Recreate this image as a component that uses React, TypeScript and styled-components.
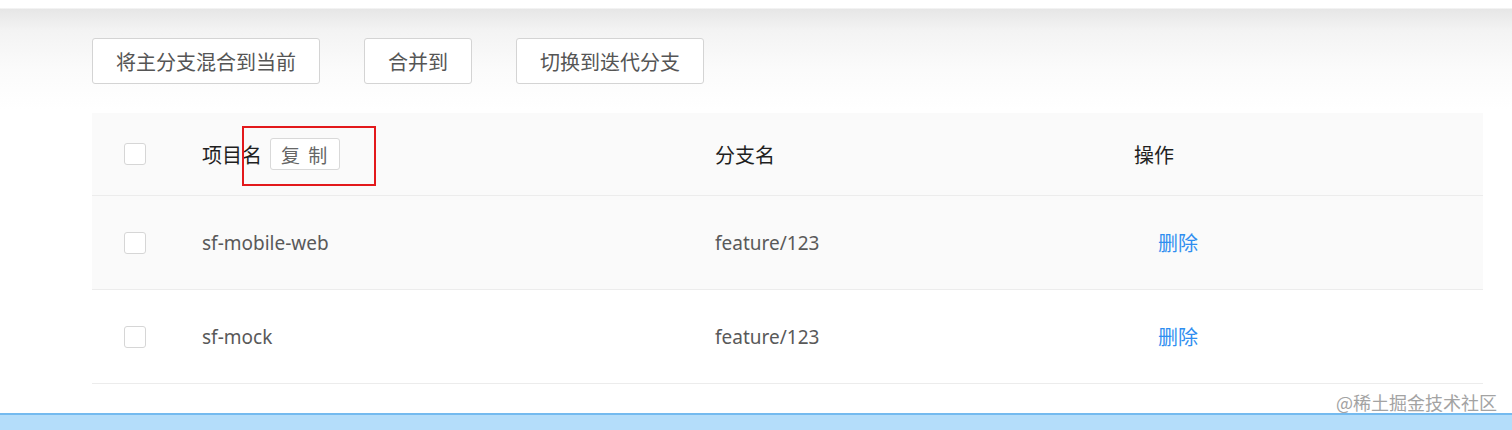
import { styled, createGlobalStyle } from "styled-components";

const GlobalStyle = createGlobalStyle`
  html, body {
    margin: 0;
    padding: 0;
    background: #fff;
  }
  body {
    font-family: "Noto Sans", "Noto Sans CJK SC", sans-serif;
  }
`;

const rows = [
  { name: "sf-mobile-web", branch: "feature/123", hover: true },
  { name: "sf-mock", branch: "feature/123", hover: false },
];

export const App = () => {
  return (
    <Page>
      <GlobalStyle />
      <Toolbar>
        <Button>将主分支混合到当前</Button>
        <Button>合并到</Button>
        <Button>切换到迭代分支</Button>
      </Toolbar>
      <Table>
        <HeadRow>
          <Cell>
            <Check />
          </Cell>
          <Cell>
            <NameHead>
              项目名
              <CopyButton>复 制</CopyButton>
              <Mark />
            </NameHead>
          </Cell>
          <Cell>分支名</Cell>
          <Cell>操作</Cell>
        </HeadRow>
        {rows.map((r) => (
          <Row key={r.name} $hover={r.hover}>
            <Cell>
              <Check />
            </Cell>
            <Cell>{r.name}</Cell>
            <Cell>{r.branch}</Cell>
            <Cell>
              <Link>删除</Link>
            </Cell>
          </Row>
        ))}
      </Table>
      <Footer>
        <Watermark>@稀土掘金技术社区</Watermark>
      </Footer>
    </Page>
  );
};
export default App;

const Page = styled.div`
  width: 1512px;
  height: 430px;
  overflow: hidden;
  display: flex;
  flex-direction: column;
  background: linear-gradient(
    #ffffff 0,
    #ffffff 8px,
    #e6e6e6 9px,
    #f3f3f3 30px,
    #fbfbfb 70px,
    #ffffff 110px
  );
`;

const Toolbar = styled.div`
  display: flex;
  gap: 44px;
  padding: 38px 0 0 92px;
`;

const Button = styled.div`
  height: 46px;
  box-sizing: border-box;
  padding: 0 23px;
  display: flex;
  align-items: center;
  border: 1px solid #d4d4d4;
  border-radius: 3px;
  background: #fff;
  color: #555;
  font-size: 20px;
  font-family: "Noto Sans CJK SC", sans-serif;
`;

const Table = styled.div`
  margin: 29px 0 0 92px;
  width: 1391px;
`;

const HeadRow = styled.div`
  display: grid;
  grid-template-columns: 110px 513px 419px 1fr;
  height: 82px;
  background: #fafafa;
  border-bottom: 1px solid #ececec;
  color: #1f1f1f;
  font-size: 20px;
  font-family: "Noto Sans CJK SC", sans-serif;
`;

const Row = styled.div<{ $hover: boolean }>`
  display: grid;
  grid-template-columns: 110px 513px 419px 1fr;
  height: 93px;
  background: ${(p) => (p.$hover ? "#fafafa" : "#fff")};
  border-bottom: 1px solid #ececec;
  color: #595959;
  font-size: 19px;
  font-family: "Noto Sans", "Noto Sans CJK SC", sans-serif;
`;

const Cell = styled.div`
  display: flex;
  align-items: center;
  &:first-child {
    padding-left: 32px;
  }
`;

const Check = styled.span`
  width: 22px;
  height: 22px;
  box-sizing: border-box;
  border: 1px solid #d6d6d6;
  border-radius: 3px;
  background: #fff;
`;

const NameHead = styled.div`
  position: relative;
  display: flex;
  align-items: center;
  gap: 8px;
`;

const CopyButton = styled.span`
  height: 32px;
  box-sizing: border-box;
  padding: 0 10px;
  display: flex;
  align-items: center;
  border: 1px solid #d9d9d9;
  border-radius: 3px;
  background: #fff;
  color: #666;
  font-size: 19px;
  letter-spacing: 2px;
`;

const Mark = styled.span`
  position: absolute;
  left: 40px;
  top: -12px;
  width: 134px;
  height: 60px;
  box-sizing: border-box;
  border: 2px solid #e3191c;
`;

const Link = styled.span`
  margin-left: 24px;
  color: #2f8ef0;
  font-size: 20px;
  font-family: "Noto Sans CJK SC", sans-serif;
`;

const Footer = styled.div`
  position: relative;
  margin-top: auto;
  height: 15px;
  background: #b4ddfa;
  border-top: 2px solid #74baef;
`;

const Watermark = styled.span`
  position: absolute;
  right: 15px;
  bottom: 17px;
  color: #a3a3a3;
  font-size: 18px;
  line-height: 22px;
  font-family: "Noto Sans CJK SC", sans-serif;
  white-space: nowrap;
`;
